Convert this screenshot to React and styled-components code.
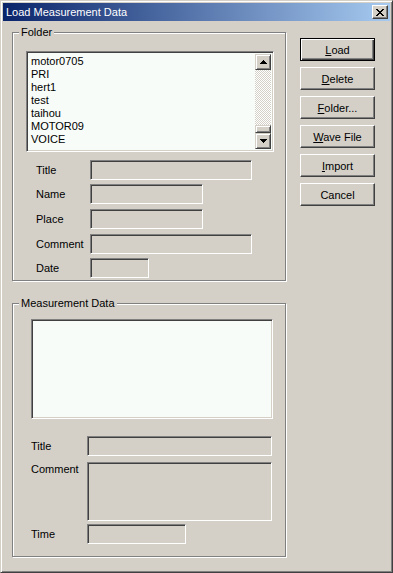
import React from 'react'
import styled, { createGlobalStyle, css } from 'styled-components'

const GlobalStyle = createGlobalStyle`
  html, body {
    margin: 0;
    padding: 0;
    background: #d4d0c8;
  }
  body {
    font-family: "Liberation Sans", Arial, sans-serif;
    font-size: 11px;
    color: #000;
  }
`

const raised = css`
  background: #d4d0c8;
  border: 1px solid;
  border-color: #fff #404040 #404040 #fff;
  box-shadow: inset -1px -1px 0 #808080;
`

const sunken = css`
  border: 1px solid;
  border-color: #808080 #fff #fff #808080;
  box-shadow: inset 1px 1px 0 #404040, inset -1px -1px 0 #d4d0c8;
`

const Window = styled.div`
  box-sizing: border-box;
  width: 393px;
  height: 573px;
  display: flex;
  flex-direction: column;
  background: #d4d0c8;
  border: 1px solid;
  border-color: #d4d0c8 #404040 #404040 #d4d0c8;
  box-shadow: inset 1px 1px 0 #fff, inset -1px -1px 0 #808080;
  padding: 2px;
`

const TitleBar = styled.div`
  flex: none;
  height: 18px;
  display: flex;
  align-items: center;
  justify-content: space-between;
  padding: 0 2px;
  background: linear-gradient(to right, #0a246a, #a6caf0);
  color: #fff;
`

const TitleText = styled.span`
  line-height: 13px;
  padding-left: 1px;
`

const CloseButton = styled.button`
  ${raised};
  box-sizing: border-box;
  width: 16px;
  height: 14px;
  padding: 0;
  display: flex;
  align-items: center;
  justify-content: center;
`

const Body = styled.div`
  flex: 1;
  display: flex;
  align-items: flex-start;
  padding: 5px 0 0 9px;
`

const LeftCol = styled.div`
  display: flex;
  flex-direction: column;
  gap: 16px;
`

const GroupBox = styled.fieldset`
  box-sizing: border-box;
  width: 274px;
  min-width: 0;
  margin: 0;
  border: 1px solid #808080;
  box-shadow: 1px 1px 0 #fff, inset 1px 1px 0 #fff;
  padding: ${p => p.$pt}px 0 ${p => p.$pb}px 6px;
`

const Legend = styled.legend`
  padding: 0 2px;
  line-height: 13px;
  background: #d4d0c8;
`

const ListBox = styled.div`
  ${sunken};
  box-sizing: border-box;
  width: ${p => p.$w}px;
  height: ${p => p.$h}px;
  margin-left: ${p => p.$ml}px;
  background: #f8fcf8;
  display: flex;
  padding: 2px;
`

const Items = styled.div`
  flex: 1;
  padding: 1px 2px;
`

const Item = styled.div`
  line-height: 13px;
  white-space: nowrap;
`

const ScrollBar = styled.div`
  width: 16px;
  display: flex;
  flex-direction: column;
`

const ScrollButton = styled.div`
  box-sizing: border-box;
  height: 16px;
  flex: none;
  display: flex;
  align-items: center;
  justify-content: center;
  background: #d4d0c8;
  border: 1px solid;
  border-color: #d4d0c8 #404040 #404040 #d4d0c8;
  box-shadow: inset 1px 1px 0 #fff, inset -1px -1px 0 #808080;
`

const Thumb = styled(ScrollButton)`
  height: 8px;
`

const Track = styled.div`
  flex: 1;
  background: repeating-conic-gradient(#d4d0c8 0 25%, #fff 0 50%) 0 0 / 2px 2px;
`

const Row = styled.div`
  display: flex;
  align-items: ${p => (p.$top ? 'flex-start' : 'center')};
  margin: ${p => p.$mt}px 0 0 ${p => p.$ml}px;
`

const Label = styled.span`
  flex: none;
  width: ${p => p.$w}px;
  line-height: 13px;
  margin-top: ${p => (p.$top ? 1 : 0)}px;
`

const Field = styled.div`
  ${sunken};
  box-sizing: border-box;
  width: ${p => p.$w}px;
  height: ${p => p.$h || 20}px;
  background: #d4d0c8;
`

const ButtonCol = styled.div`
  display: flex;
  flex-direction: column;
  gap: 6px;
  margin: 12px 0 0 14px;
`

const Button = styled.button`
  ${raised};
  box-sizing: border-box;
  width: 75px;
  height: 23px;
  padding: 0;
  font: 11px "Liberation Sans", Arial, sans-serif;
  color: #000;
  ${p =>
    p.$default &&
    css`
      border: 1px solid #000;
      box-shadow: inset 1px 1px 0 #fff, inset -1px -1px 0 #404040, inset -2px -2px 0 #808080;
    `}
`

const CloseIcon = () => (
  <svg width="8" height="7" viewBox="0 0 8 7" shapeRendering="crispEdges">
    <path
      fill="#000"
      d="M0 0h2v1h-2zM6 0h2v1h-2zM1 1h2v1h-2zM5 1h2v1h-2zM2 2h4v1h-4zM3 3h2v1h-2zM2 4h4v1h-4zM1 5h2v1h-2zM5 5h2v1h-2zM0 6h2v1h-2zM6 6h2v1h-2z"
    />
  </svg>
)

const Arrow = ({ down }) => (
  <svg width="7" height="4" viewBox="0 0 7 4" shapeRendering="crispEdges">
    <path fill="#000" d={down ? 'M0 0h7l-3.5 4z' : 'M3.5 0l3.5 4h-7z'} />
  </svg>
)

const folders = ['motor0705', 'PRI', 'hert1', 'test', 'taihou', 'MOTOR09', 'VOICE']

const folderFields = [
  { label: 'Title', w: 162, mt: 8 },
  { label: 'Name', w: 113, mt: 4 },
  { label: 'Place', w: 113, mt: 5 },
  { label: 'Comment', w: 162, mt: 5 },
  { label: 'Date', w: 59, mt: 4 },
]

export default function App() {
  return (
    <>
      <GlobalStyle />
      <Window>
        <TitleBar>
          <TitleText>Load Measurement Data</TitleText>
          <CloseButton>
            <CloseIcon />
          </CloseButton>
        </TitleBar>
        <Body>
          <LeftCol>
            <GroupBox $pt={12} $pb={2}>
              <Legend>Folder</Legend>
              <ListBox $w={248} $h={101} $ml={7}>
                <Items>
                  {folders.map(f => (
                    <Item key={f}>{f}</Item>
                  ))}
                </Items>
                <ScrollBar>
                  <ScrollButton>
                    <Arrow />
                  </ScrollButton>
                  <Track />
                  <Thumb />
                  <ScrollButton>
                    <Arrow down />
                  </ScrollButton>
                </ScrollBar>
              </ListBox>
              {folderFields.map(f => (
                <Row key={f.label} $mt={f.mt} $ml={17}>
                  <Label $w={54}>{f.label}</Label>
                  <Field $w={f.w} />
                </Row>
              ))}
            </GroupBox>
            <GroupBox $pt={9} $pb={12}>
              <Legend>Measurement Data</Legend>
              <ListBox $w={242} $h={100} $ml={12} />
              <Row $mt={17} $ml={12}>
                <Label $w={56}>Title</Label>
                <Field $w={185} />
              </Row>
              <Row $mt={6} $ml={12} $top>
                <Label $w={56} $top>Comment</Label>
                <Field $w={185} $h={59} />
              </Row>
              <Row $mt={3} $ml={12}>
                <Label $w={56}>Time</Label>
                <Field $w={99} />
              </Row>
            </GroupBox>
          </LeftCol>
          <ButtonCol>
            <Button $default>
              <u>L</u>oad
            </Button>
            <Button>
              <u>D</u>elete
            </Button>
            <Button>
              <u>F</u>older...
            </Button>
            <Button>
              <u>W</u>ave File
            </Button>
            <Button>
              <u>I</u>mport
            </Button>
            <Button>Cancel</Button>
          </ButtonCol>
        </Body>
      </Window>
    </>
  )
}
